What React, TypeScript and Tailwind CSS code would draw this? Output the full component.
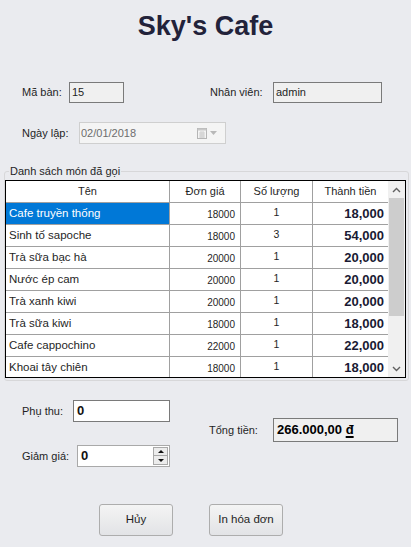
import React from "react";

const rows = [
  ["Cafe truyền thống", "18000", "1", "18,000"],
  ["Sinh tố sapoche", "18000", "3", "54,000"],
  ["Trà sữa bạc hà", "20000", "1", "20,000"],
  ["Nước ép cam", "20000", "1", "20,000"],
  ["Trà xanh kiwi", "20000", "1", "20,000"],
  ["Trà sữa kiwi", "18000", "1", "18,000"],
  ["Cafe cappochino", "22000", "1", "22,000"],
  ["Khoai tây chiên", "18000", "1", "18,000"],
];

const Chevron = ({ up }: { up?: boolean }) => (
  <svg width="9" height="6" viewBox="0 0 9 6">
    <polyline
      points={up ? "1,5 4.5,1.5 8,5" : "1,1 4.5,4.5 8,1"}
      fill="none"
      stroke="#606060"
      strokeWidth="1.4"
    />
  </svg>
);

const App = () => {
  return (
    <div className="w-[411px] h-[547px] bg-[#eaebef] font-['Liberation_Sans',Arial,sans-serif] text-[11px] text-[#1f1f1f] flex flex-col">
      {/* title */}
      <div className="pt-[11px] text-center text-[27px] leading-[31px] font-bold text-[#22223a]">
        Sky's Cafe
      </div>

      {/* ma ban / nhan vien */}
      <div className="mt-[40px] flex items-center pl-[22px] h-[21px]">
        <span className="w-[47px]">Mã bàn:</span>
        <div className="w-[55px] h-[21px] bg-[#f0f0f0] border border-[#7a7a7a] flex items-center pl-[2px]">
          15
        </div>
        <span className="ml-[86px] w-[63px]">Nhân viên:</span>
        <div className="w-[109px] h-[21px] bg-[#f0f0f0] border border-[#7a7a7a] flex items-center pl-[2px]">
          admin
        </div>
      </div>

      {/* ngay lap */}
      <div className="mt-[19px] flex items-center pl-[22px] h-[22px]">
        <span className="w-[57px]">Ngày lập:</span>
        <div className="w-[147px] h-[22px] bg-[#f4f4f4] border border-[#cfcfcf] flex items-center pl-[1px] text-[#6d6d6d]">
          <span className="flex-1">02/01/2018</span>
          <svg width="10" height="11" viewBox="0 0 10 11" className="mr-[3px]">
            <rect x="0.5" y="0.5" width="9" height="10" fill="#f4f4f4" stroke="#b5b5b5" />
            <rect x="0.5" y="0.5" width="9" height="2" fill="#c8c8c8" />
            <path d="M2 5h6M2 7h6M2 9h6M4 3v7M6 3v7" stroke="#c6c6c6" strokeWidth="0.8" />
          </svg>
          <svg width="7" height="4" viewBox="0 0 7 4" className="mr-[8px]">
            <polygon points="0,0 7,0 3.5,4" fill="#b8b8b8" />
          </svg>
        </div>
      </div>

      {/* danh sach */}
      <fieldset className="mt-[20px] mx-[4px] w-[405px] border border-[#d7d7d9] rounded-[3px] pr-[2px] pb-[2px]">
        <legend className="ml-[4px] px-[1px] leading-[14px]">Danh sách món đã gọi</legend>
        <div className="mt-[2px] w-[401px] h-[198px] border border-black flex overflow-hidden bg-white">
          <div className="w-[382px] flex flex-col overflow-hidden">
            <div className="flex h-[22px] shrink-0 border-b border-[#a0a0a0] bg-white">
              <div className="w-[164px] border-r border-[#a0a0a0] flex items-center justify-center">Tên</div>
              <div className="w-[71px] border-r border-[#a0a0a0] flex items-center justify-center">Đơn giá</div>
              <div className="w-[72px] border-r border-[#a0a0a0] flex items-center justify-center">Số lượng</div>
              <div className="w-[75px] flex items-center justify-center">Thành tiền</div>
            </div>
            {rows.map((r, i) => (
              <div key={i} className="flex h-[22px] shrink-0 border-b border-[#a0a0a0]">
                <div
                  className={`w-[164px] border-r border-[#a0a0a0] flex items-center pl-[3px] text-[11.5px] ${
                    i === 0 ? "bg-[#0078d7] text-white" : ""
                  }`}
                >
                  {r[0]}
                </div>
                <div className="w-[71px] border-r border-[#a0a0a0] flex items-end justify-end pr-[5px] pb-[2px] text-[10px]">
                  {r[1]}
                </div>
                <div className="w-[72px] border-r border-[#a0a0a0] flex items-center justify-center pb-[2px] text-[10.5px]">
                  {r[2]}
                </div>
                <div className="w-[75px] flex items-end justify-end pr-[4px] pb-[1px] text-[13px] font-bold text-[#1a1a33]">
                  {r[3]}
                </div>
              </div>
            ))}
          </div>
          <div className="w-[17px] bg-[#f0f0f0] flex flex-col items-center">
            <div className="h-[17px] flex items-center justify-center">
              <Chevron up />
            </div>
            <div className="w-[15px] h-[118px] bg-[#cdcdcd]" />
            <div className="flex-1" />
            <div className="h-[17px] flex items-center justify-center">
              <Chevron />
            </div>
          </div>
        </div>
      </fieldset>

      {/* bottom */}
      <div className="mt-[19px] flex">
        <div className="pl-[22px] flex flex-col">
          <div className="flex items-center h-[22px]">
            <span className="w-[51px]">Phụ thu:</span>
            <div className="w-[97px] h-[22px] bg-white border border-[#7a7a7a] flex items-center pl-[3px] text-[13px] font-bold text-[#111]">
              0
            </div>
          </div>
          <div className="mt-[23px] flex items-center h-[22px]">
            <span className="w-[55px]">Giảm giá:</span>
            <div className="w-[93px] h-[22px] bg-white border border-[#a9a9a9] flex items-center pl-[3px] text-[13px] font-bold text-[#111]">
              <span className="flex-1">0</span>
              <div className="flex flex-col mr-[1px]">
                <div className="w-[15px] h-[9px] border border-[#a9a9a9] bg-[#ececec] flex items-center justify-center">
                  <svg width="6" height="3" viewBox="0 0 6 3">
                    <polygon points="0,3 6,3 3,0" fill="#111" />
                  </svg>
                </div>
                <div className="w-[15px] h-[9px] border border-[#a9a9a9] border-t-0 bg-[#ececec] flex items-center justify-center">
                  <svg width="6" height="3" viewBox="0 0 6 3">
                    <polygon points="0,0 6,0 3,3" fill="#111" />
                  </svg>
                </div>
              </div>
            </div>
          </div>
        </div>
        <div className="ml-[39px] mt-[18px] flex items-center h-[24px]">
          <span className="w-[64px]">Tổng tiền:</span>
          <div className="w-[125px] h-[24px] bg-[#f0f0f0] border border-[#7a7a7a] flex items-center pl-[3px] text-[13px] font-bold text-black">
            266.000,00&nbsp;<span className="underline underline-offset-[2px] decoration-[1.5px]">đ</span>
          </div>
        </div>
      </div>

      {/* buttons */}
      <div className="mt-[37px] flex pl-[99px] gap-[36px]">
        <button className="w-[74px] h-[32px] rounded-[3px] border border-[#adadad] bg-gradient-to-b from-[#f4f4f4] to-[#e2e3e6] text-[11.5px] text-[#1f1f1f]">
          Hủy
        </button>
        <button className="w-[74px] h-[32px] rounded-[3px] border border-[#adadad] bg-gradient-to-b from-[#f4f4f4] to-[#e2e3e6] text-[11.5px] text-[#1f1f1f]">
          In hóa đơn
        </button>
      </div>
    </div>
  );
};

export default App;
